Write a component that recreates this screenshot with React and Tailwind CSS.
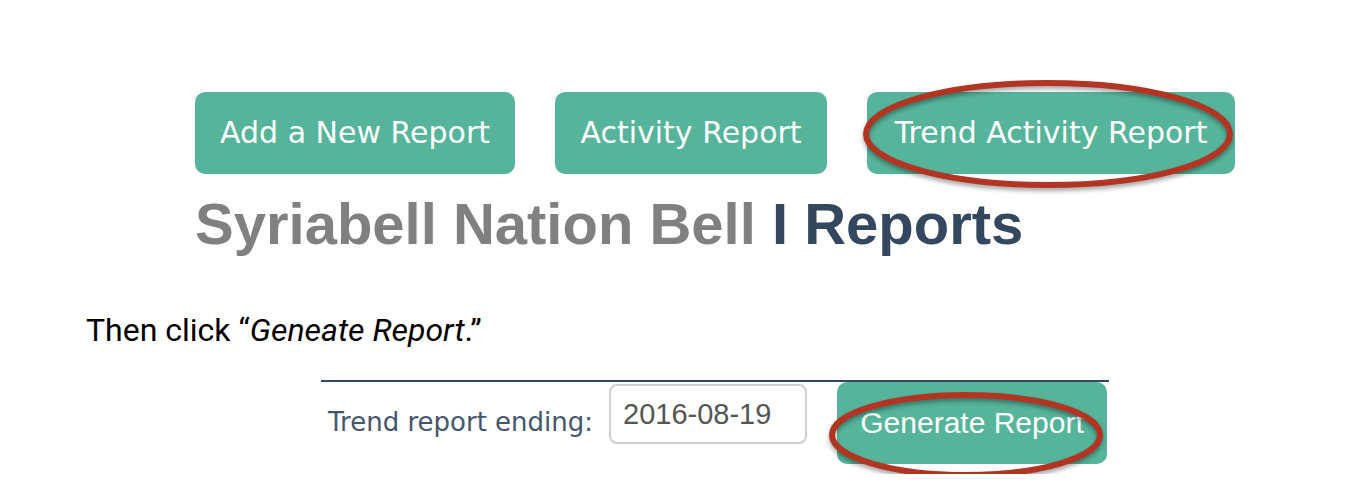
function Highlight({ className, width, height }) {
  return (
    <svg
      aria-hidden="true"
      className={`pointer-events-none absolute overflow-visible ${className}`}
      viewBox={`0 0 ${width} ${height}`}
      width={width}
      height={height}
      fill="none"
    >
      <ellipse
        cx={width / 2}
        cy={height / 2}
        rx={width / 2 - 3}
        ry={height / 2 - 3}
        stroke="#b23524"
        strokeWidth="6"
        style={{ filter: "drop-shadow(0 3px 2px rgba(0,0,0,0.35))" }}
      />
    </svg>
  );
}

function ActionButton({ className = "", children }) {
  return (
    <button
      type="button"
      className={`h-[82px] shrink-0 whitespace-nowrap rounded-[10px] bg-[#55b49a] text-white ${className}`}
    >
      {children}
    </button>
  );
}

export default function App() {
  return (
    <main className="flex flex-col bg-white pt-[80px] pr-[11px] pb-5 pl-[86px] text-black">
      <section className="mx-auto w-fit overflow-hidden">
        <div className="flex gap-10 pt-3 font-['DejaVu_Sans',sans-serif] text-[30px] leading-9">
          <ActionButton className="w-[320px]">Add a New Report</ActionButton>
          <ActionButton className="w-[272px]">Activity Report</ActionButton>
          <div className="relative flex">
            <ActionButton className="w-[368px]">Trend Activity Report</ActionButton>
            <Highlight className="-top-3 -left-1" width={370} height={108} />
          </div>
        </div>
        <h1 className="mt-4 whitespace-nowrap font-['Liberation_Sans',sans-serif] text-[58px] leading-[68px] font-bold text-[#33475f]">
          <span className="text-[#808080]">Syriabell Nation Bell</span> I Reports
        </h1>
      </section>

      <p className="mt-[52px] font-[Roboto,sans-serif] text-[32px] leading-10">
        Then click “<em>Geneate Report</em>.”
      </p>

      <form className="mx-auto mt-[30px] flex w-fit items-start overflow-hidden border-t-2 border-[#34495e] pl-[7px]">
        <label
          htmlFor="ending"
          className="mt-6 w-[273px] whitespace-nowrap font-['DejaVu_Sans',sans-serif] text-[26px] leading-8 text-[#44566c]"
        >
          Trend report ending:
        </label>
        <input
          id="ending"
          type="text"
          defaultValue="2016-08-19"
          className="mt-[2px] ml-2 h-[60px] w-[198px] rounded-lg border-2 border-[#d0d0d0] bg-white px-3 font-['Liberation_Sans',sans-serif] text-[29px] leading-9 text-[#555555]"
        />
        <div className="relative mr-[2px] ml-[30px] flex h-[92px] items-start">
          <ActionButton className="w-[270px] font-['Liberation_Sans',sans-serif] text-[30px] leading-9">
            Generate Report
          </ActionButton>
          <Highlight className="top-[10px] -left-2" width={274} height={86} />
        </div>
      </form>
    </main>
  );
}
